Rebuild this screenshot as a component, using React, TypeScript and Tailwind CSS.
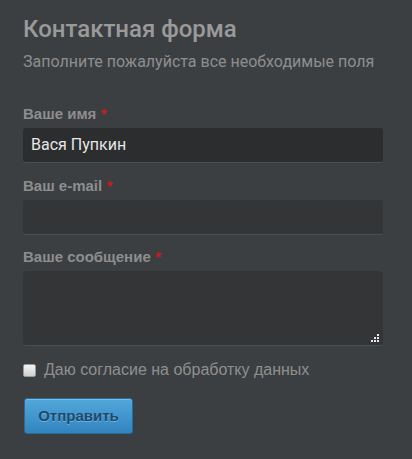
export default function App() {
  return (
    <div className="min-h-[459px] w-[412px] bg-[#3c3f42] px-[23px] pt-[13px] font-['Roboto',sans-serif]">
      <h1 className="text-[24px] font-medium leading-[32px] text-[#9a9a9a]">
        Контактная форма
      </h1>
      <p className="mt-[7px] text-[16px] leading-[20px] text-[#8e8e8e]">
        Заполните пожалуйста все необходимые поля
      </p>

      <form className="mt-[33px] w-[360px]">
        <Label text="Ваше имя" />
        <div className="mt-[5px] flex h-[35px] items-center rounded-[3px] border-b border-[#4c4f52] bg-[#2b2d2f] px-[8px] text-[16px] text-[#e6e6e6]">
          Вася Пупкин
        </div>

        <div className="mt-[14px]">
          <Label text="Ваш e-mail" />
        </div>
        <div className="mt-[5px] h-[35px] rounded-[3px] border-b border-[#4c4f52] bg-[#333537]" />

        <div className="mt-[13px]">
          <Label text="Ваше сообщение" />
        </div>
        <div className="relative mt-[5px] h-[75px] rounded-[3px] border-b border-[#4c4f52] bg-[#333537]">
          <svg
            className="absolute bottom-[3px] right-[4px]"
            width="8"
            height="8"
            viewBox="0 0 8 8"
            fill="#e8e8e8"
          >
            <rect x="6" y="0" width="2" height="2" />
            <rect x="3" y="3" width="2" height="2" />
            <rect x="6" y="3" width="2" height="2" />
            <rect x="0" y="6" width="2" height="2" />
            <rect x="3" y="6" width="2" height="2" />
            <rect x="6" y="6" width="2" height="2" />
          </svg>
        </div>

        <label className="mt-[14px] flex h-[20px] items-center gap-[8px] font-['Liberation_Sans',sans-serif] text-[16px] text-[#8f8f8f]">
          <span className="h-[13px] w-[13px] rounded-[2px] border border-[#9a9a9a] bg-gradient-to-b from-[#f4f4f4] to-[#cfcfcf]" />
          Даю согласие на обработку данных
        </label>

        <button
          type="button"
          className="mt-[18px] ml-[1px] h-[36px] w-[109px] rounded-[3px] border border-[#2b6a99] bg-gradient-to-b from-[#52a8da] to-[#3284c0] font-['Liberation_Sans',sans-serif] text-[15px] font-bold text-[#1d4a6e] [text-shadow:0_1px_0_rgba(255,255,255,0.3)] shadow-[inset_0_1px_0_rgba(255,255,255,0.25)]"
        >
          Отправить
        </button>
      </form>
    </div>
  );
}

function Label({ text }: { text: string }) {
  return (
    <div className="font-['Liberation_Sans',sans-serif] text-[15px] font-bold leading-[18px] text-[#8e8e8e]">
      {text} <span className="text-[#cc1a1a]">*</span>
    </div>
  );
}
